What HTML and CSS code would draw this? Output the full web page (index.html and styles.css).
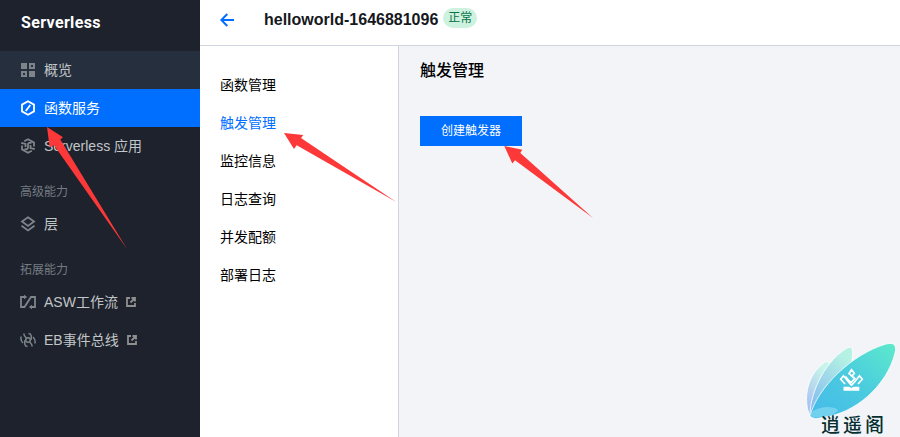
FILE: index.html
```html
<!DOCTYPE html>
<html lang="zh-CN">
<head>
<meta charset="utf-8">
<title>Serverless</title>
<link rel="stylesheet" href="styles.css">
</head>
<body>
<div class="app">
  <aside class="sidebar">
    <h1 class="brand">Serverless</h1>
    <nav>
      <a class="item hover"><svg class="icon" viewBox="0 0 16 16"><path fill="currentColor" fill-rule="evenodd" d="M1 1h6v6H1zM9 1h6v6H9zm2 2v2h2V3zM1 9h6v6H1zm2 2v2h2v-2zM9 9h6v6H9z"/></svg><span>概览</span></a>
      <a class="item active"><svg class="icon" viewBox="0 0 16 16"><path class="line" d="M8 1.2 14 4.6v6.8L8 14.8 2 11.4V4.6z"/><path class="line" d="M10.3 5 5.8 11"/></svg><span>函数服务</span></a>
      <a class="item"><svg class="icon" viewBox="0 0 16 16"><path class="line" d="M4.2 3.3 8 1.2l6 3.4v4M11.8 12.7 8 14.8l-6-3.4v-4M1.2 4.8 5.5 6v3M14.8 11.2 10.5 10V7M11.5 4.8H9L8 6v4l-1 1.2H4.5"/></svg><span>Serverless 应用</span></a>
      <h2 class="group">高级能力</h2>
      <a class="item"><svg class="icon" viewBox="0 0 16 16"><path class="line" d="m8 1.3 6 4.3-6 4.3-6-4.3zM1.5 9.8 8 14.4l6.5-4.6"/></svg><span>层</span></a>
      <h2 class="group">拓展能力</h2>
      <a class="item"><svg class="icon" viewBox="0 0 16 16"><path class="line" d="M5 3H1v10h3.5L11 3h4v10h-4"/><path fill="currentColor" d="m4 .8 3.2 2.2L4 5.2zM12 10.8v4.4L8.8 13z"/></svg><span>ASW工作流</span><svg class="ext" viewBox="0 0 10 10"><path class="line" d="M4 1H1v8h8V6M5.5 1H9v3.5M9 1 4.5 5.5"/></svg></a>
      <a class="item"><svg class="icon" viewBox="0 0 16 16"><circle class="line thin" cx="8" cy="8" r="2.3"/><path class="line thin" d="M3.8 1.5c0 2 1 3.2 2.6 4.5M12.2 14.5c0-2-1-3.2-2.6-4.5M8.5 1.5c2.5 0 3.3 2.8 2.5 6.3M7.5 14.5C5 14.5 4.2 11.7 5 8.2M1 4.5C.6 7.5 1.2 9.3 3 11M15 11.5c.4-3-.2-4.8-2-6.5"/></svg><span>EB事件总线</span><svg class="ext" viewBox="0 0 10 10"><path class="line" d="M4 1H1v8h8V6M5.5 1H9v3.5M9 1 4.5 5.5"/></svg></a>
    </nav>
  </aside>
  <div class="main">
    <header class="header">
      <svg class="back" viewBox="0 0 14 14"><path d="M14 7H1.5M7.3 1 1.3 7l6 6"/></svg>
      <span class="title">helloworld-1646881096</span>
      <span class="badge">正常</span>
    </header>
    <div class="body">
      <nav class="subnav">
        <a>函数管理</a>
        <a class="current">触发管理</a>
        <a>监控信息</a>
        <a>日志查询</a>
        <a>并发配额</a>
        <a>部署日志</a>
      </nav>
      <main class="content">
        <h2 class="heading">触发管理</h2>
        <button class="create">创建触发器</button>
      </main>
    </div>
  </div>
  <svg class="arrows" viewBox="0 0 900 437">
    <path d="m47 127 16 10.3-2.7 2.2 66.7 109.5L54 145.3l-4.3 2.2z"/>
    <path d="m284 133 19.3 2-2.3 2.9 95.3 64.2-99.6-56.9-2.7 3.9z"/>
    <path d="m504.3 146 18 3.8-2 3.2 72.7 65L515 160.2l-2.7 3.2z"/>
  </svg>
  <div class="watermark">
    <svg viewBox="0 0 96 80">
      <defs>
        <linearGradient id="wing" x1="0" y1="1" x2="1" y2="0"><stop offset="0" stop-color="#46b9ea"/><stop offset=".5" stop-color="#4acbdf"/><stop offset="1" stop-color="#5eeacb"/></linearGradient>
        <linearGradient id="mid" x1="0" y1="1" x2=".6" y2="0"><stop offset="0" stop-color="#80b5f0"/><stop offset="1" stop-color="#b5f2e4"/></linearGradient>
        <linearGradient id="back" x1="0" y1="1" x2=".5" y2="0"><stop offset="0" stop-color="#a3b7f2"/><stop offset="1" stop-color="#c8f5ea"/></linearGradient>
      </defs>
      <path class="petal" fill="url(#back)" d="M8 76C1 61 4 35 23 22c5-2 5 4 2 12z"/>
      <path class="petal" fill="url(#mid)" d="M8 76C8 49 26 19 45 8c6-3 7 3 4 17z"/>
      <path class="petal" fill="url(#wing)" d="M8 76C15 48 50 14 84 4c8-2 11 1 9 9C85 46 52 74 22 77c-7 2-11 2-14-1z"/>
      <path fill="#8bdcf2" opacity=".65" d="M8 76c0-8 21-12 28-6-3 6-20 9-28 6z"/>
      <path fill="none" stroke="#fff" stroke-width="1.7" d="m43 44-4.3-4.8 2.8-3.4 6 7.4 2 2 2-2 6-7.4 2.8 3.4L56 44M43.5 36.5l3 3.5 2.5 2.5 3.8-4-5.8-5 2.5-3.8 2.8 3.6-3 3.7"/>
      <path fill="#fff" d="M41.5 46.8h5.7l2.2 1.3 2.2-1.3h5.7v4H41.5z"/>
    </svg>
    <span class="mark">逍遥阁</span>
  </div>
</div>
</body>
</html>
```
FILE: styles.css
```css
* { box-sizing: border-box; }
body {
  margin: 0;
  font: 14px/20px "Liberation Sans", "Noto Sans CJK SC", sans-serif;
  color: #000;
}
h1, h2 { margin: 0; }
.app {
  position: relative;
  display: flex;
  height: 437px;
  overflow: hidden;
}
.sidebar {
  width: 200px;
  flex: none;
  background: #1e222d;
  color: #c1c6c8;
}
.brand {
  height: 51px;
  padding: 0 21px;
  font: bold 16px/45px Roboto, sans-serif;
  letter-spacing: .35px;
  color: #fff;
}
.item {
  display: flex;
  align-items: center;
  height: 38px;
  padding-left: 20px;
}
.item.hover { background: #262f3e; }
.item.active { background: #006eff; color: #fff; }
.icon {
  width: 16px;
  height: 16px;
  margin-right: 8px;
  color: #7d858a;
}
.active .icon { color: #fff; }
.line { fill: none; stroke: currentColor; stroke-width: 1.8; }
.line.thin { stroke-width: 1.5; }
.ext {
  width: 10px;
  height: 10px;
  margin-left: 8px;
  color: #8f8f8f;
}
.group {
  height: 40px;
  padding: 17px 20px 0;
  font-size: 12px;
  font-weight: 400;
  color: #747c82;
}
.main {
  flex: 1;
  display: flex;
  flex-direction: column;
}
.header {
  display: flex;
  align-items: center;
  height: 46px;
  padding: 0 20px 7px;
  border-bottom: 1px solid #cfd5de;
  background: #fff;
}
.back {
  width: 14px;
  height: 14px;
  margin-top: 2px;
  fill: none;
  stroke: #006eff;
  stroke-width: 2;
}
.title {
  margin: 2px 0 0 30px;
  font-size: 16px;
  font-weight: 700;
  color: #16181d;
}
.badge {
  height: 20px;
  margin: -2px 0 0 5px;
  padding: 0 5px;
  border-radius: 10px;
  background: #cdf2df;
  color: #087348;
  font-size: 12px;
}
.body { flex: 1; display: flex; }
.subnav {
  width: 199px;
  padding: 20px;
  border-right: 1px solid #cfd5de;
  background: #fff;
}
.subnav a { display: block; line-height: 38px; }
.subnav .current { color: #006eff; }
.content {
  flex: 1;
  padding: 13px 21px;
  background: #f2f4f8;
}
.heading {
  font-size: 16px;
  line-height: 24px;
  font-weight: 500;
}
.create {
  display: block;
  width: 102px;
  height: 30px;
  margin-top: 33px;
  padding: 0;
  border: 0;
  background: #006eff;
  color: #fff;
  font: 12px/30px "Liberation Sans", "Noto Sans CJK SC", sans-serif;
}
.arrows {
  position: absolute;
  inset: 0;
  width: 900px;
  height: 437px;
  fill: #fd3838;
}
.watermark {
  position: absolute;
  right: 2px;
  bottom: 0;
  width: 96px;
  height: 97px;
}
.watermark svg { display: block; width: 96px; height: 80px; }
.petal { stroke: #fff; stroke-width: .8; }
.mark {
  display: block;
  margin: -7px 0 0 19px;
  font: 500 19px/22px "Noto Sans CJK SC", sans-serif;
  letter-spacing: 3px;
  white-space: nowrap;
  color: #052f30;
}
```
